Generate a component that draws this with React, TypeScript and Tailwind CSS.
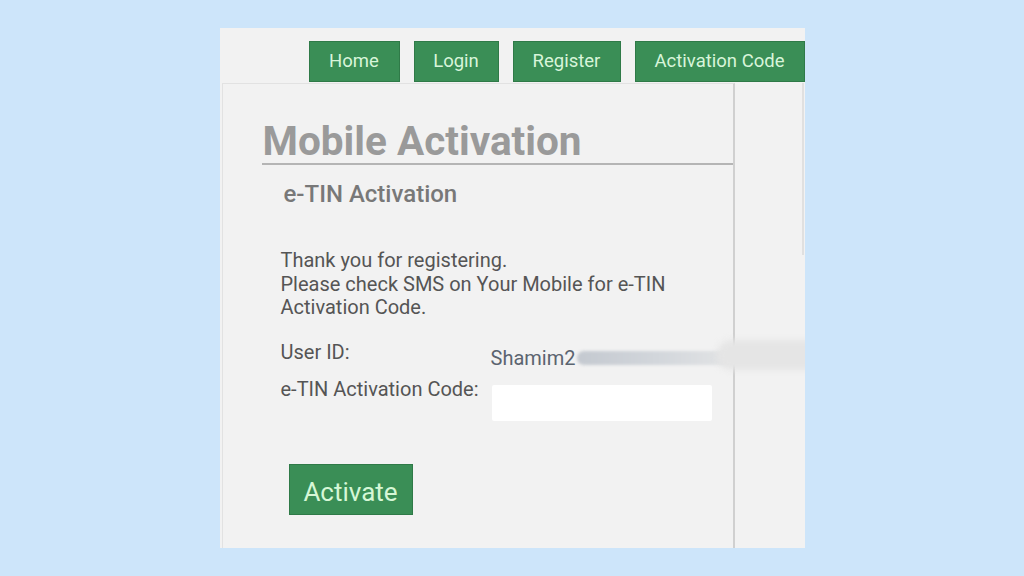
import React from 'react';

const navItems = [
  { label: 'Home', w: 'w-[91px]' },
  { label: 'Login', w: 'w-[85px]' },
  { label: 'Register', w: 'w-[108px]' },
  { label: 'Activation Code', w: 'w-[170px]' },
];

const App: React.FC = () => {
  return (
    <div
      className="w-[1024px] h-[576px] bg-[#cde5fa] flex items-center justify-center"
      style={{ fontFamily: 'Roboto, "Noto Sans", sans-serif' }}
    >
      <div className="w-[585px] h-[520px] bg-[#f2f2f2] flex flex-col overflow-hidden">
        {/* Nav */}
        <div className="h-[55px] pt-[13px] pl-[89px] flex gap-[14px] shrink-0">
          {navItems.map((item) => (
            <div
              key={item.label}
              className={`${item.w} h-[41px] shrink-0 bg-[#3a8e56] border border-[#2f7a48] text-[#d8f5da] text-[18.5px] pt-[1px] flex items-center justify-center`}
            >
              {item.label}
            </div>
          ))}
        </div>

        {/* Body */}
        <div className="flex flex-1 min-h-0 bg-[#f2f2f2]">
          <div className="w-[513px] ml-[2px] border-l border-t border-[#e2e2e2] border-r-2 border-r-[#d0d0d0] flex flex-col">
            {/* Heading */}
            <div className="mt-[37px] ml-[39px] border-b-2 border-[#b5b5b5] pb-[2px]">
              <h1 className="text-[40.5px] leading-[40px] font-bold text-[#9a9a9a] pl-[1px]">Mobile Activation</h1>
            </div>

            <div className="pl-[58px] pr-4 flex flex-col">
              <h2 className="mt-[15px] text-[24px] leading-[28px] font-medium text-[#787878] pl-[3px]">e-TIN Activation</h2>

              <p className="mt-[41px] text-[20px] leading-[23.5px] text-[#555]">
                Thank you for registering.
                <br />
                Please check SMS on Your Mobile for e-TIN
                <br />
                Activation Code.
              </p>

              <div className="mt-[21px] flex text-[20px] leading-[23px] text-[#555]">
                <span className="w-[210px] shrink-0">User ID:</span>
                <span className="relative mt-[6px] text-[#5b6470]">
                  Shamim2
                  <span className="absolute left-[86px] top-[4px] w-[160px] h-[14px] rounded-full bg-gradient-to-r from-[#c4c9d0] via-[#d2d6db] to-[#e4e5e6] blur-[1.5px]" />
                  <span className="absolute left-[226px] top-[-7px] w-[100px] h-[30px] rounded-l-full bg-[#e5e5e5] blur-[3px]" />
                </span>
              </div>

              <div className="mt-[8px] flex text-[20px] leading-[23px] text-[#555]">
                <span className="w-[211px] shrink-0">e-TIN Activation Code:</span>
                <div className="mt-[7px] w-[220px] h-[36px] bg-white rounded-[2px]" />
              </div>

              <div className="mt-[43px] pl-[8px]">
                <div className="w-[124px] h-[51px] bg-[#3a8e56] border border-[#2f7a48] text-[#d6f7d6] text-[26px] pt-[6px] flex items-center justify-center">
                  Activate
                </div>
              </div>
            </div>
          </div>

          {/* Right column */}
          <div className="flex-1 relative">
            <div className="absolute right-[1px] top-0 w-[2px] h-[172px] bg-[#e0e0e0]" />
          </div>
        </div>
      </div>
    </div>
  );
};

export default App;
